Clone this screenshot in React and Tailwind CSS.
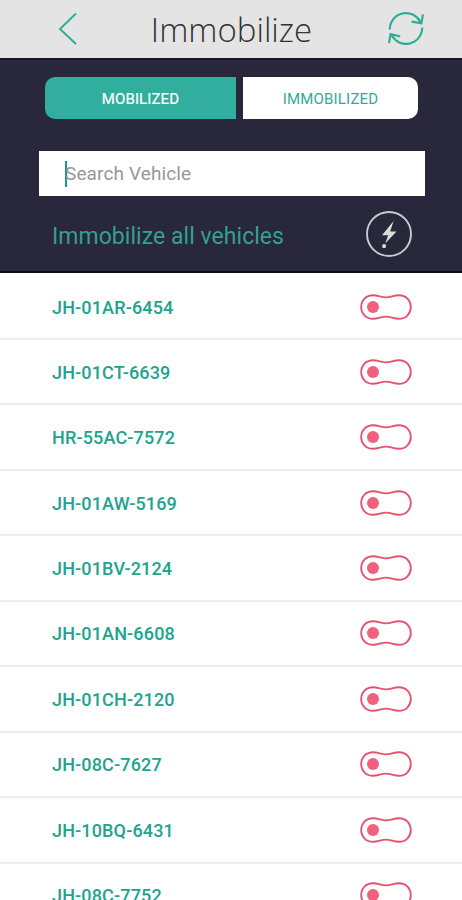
import { useState } from "react"

const vehicles = [
  "JH-01AR-6454",
  "JH-01CT-6639",
  "HR-55AC-7572",
  "JH-01AW-5169",
  "JH-01BV-2124",
  "JH-01AN-6608",
  "JH-01CH-2120",
  "JH-08C-7627",
  "JH-10BQ-6431",
  "JH-08C-7752",
]

function BackIcon() {
  return (
    <svg width="20" height="34" viewBox="0 0 20 34" fill="none" stroke="#2fae95" strokeWidth="2">
      <path d="M18 1.5 2 17l16 15" />
    </svg>
  )
}

function RefreshIcon() {
  return (
    <svg width="38" height="38" viewBox="0 0 38 38" fill="none" stroke="#2aad95" strokeWidth="2.1">
      <path d="M2.8 19.5a16.2 16.2 0 0 1 30.6-7.6" />
      <path d="M36 4.5 34.4 13.2 24.6 11.6" />
      <path d="M35.2 17.5a16.2 16.2 0 0 1-30.6 7.6" />
      <path d="M2 33 3.6 24 13.2 26.4" />
    </svg>
  )
}

function BoltIcon() {
  return (
    <svg width="48" height="48" viewBox="0 0 48 48" fill="none">
      <circle cx="24" cy="24" r="22" stroke="#cccbcc" strokeWidth="1.9" />
      <path d="M28.6 11 17 25.2h6.2L20.2 33.5 31.5 21.6h-6.3z" fill="#dddcdc" />
      <rect x="17.3" y="34.3" width="3.6" height="3.6" rx="0.8" fill="#dddcdc" />
    </svg>
  )
}

function ToggleIcon() {
  return (
    <svg width="52" height="26" viewBox="0 0 52 26" fill="none">
      <path
        d="M13 1.2C18.5 1.2 21 3.4 26 3.4S33.5 1.2 39 1.2C46 1.2 50.8 6.5 50.8 13S46 24.8 39 24.8C33.5 24.8 31 22.6 26 22.6S18.5 24.8 13 24.8C6 24.8 1.2 19.5 1.2 13S6 1.2 13 1.2Z"
        stroke="#e5546f"
        strokeWidth="1.9"
      />
      <circle cx="13" cy="13" r="6" fill="#f1607d" />
    </svg>
  )
}

export default function App() {
  const [search, setSearch] = useState("")

  return (
    <div className="h-[900px] w-[462px] overflow-hidden bg-white font-['Roboto',sans-serif]">
      <header className="flex h-[58px] items-center justify-between bg-[#e4e4e4] pl-[58px] pr-[37px]">
        <button>
          <BackIcon />
        </button>
        <h1 className="mr-[2px] pt-[2px] font-['Open_Sans',sans-serif] text-[33px] font-light leading-[40px] text-[#333]">
          Immobilize
        </h1>
        <button>
          <RefreshIcon />
        </button>
      </header>

      <section className="h-[215px] border-y-2 border-t-[#18152c] border-b-[#0c0a18] bg-[#29273c] pt-[17px]">
        <div className="ml-[45px] flex h-[42px] gap-[7px] text-[15px]">
          <button className="w-[191px] rounded-l-[10px] bg-[#31ae9e] pt-[2px] tracking-[0.1px] text-white [-webkit-text-stroke:0.2px_white]">
            MOBILIZED
          </button>
          <button className="w-[175px] rounded-r-[10px] bg-white pt-[2px] tracking-[0.2px] text-[#2fab9a]">
            IMMOBILIZED
          </button>
        </div>

        <div className="ml-[39px] mt-[32px] flex h-[45px] w-[386px] items-center bg-white pl-[26px]">
          <span className="-mr-[2px] h-[26px] w-[2px] bg-[#159b87]" />
          <input
            value={search}
            placeholder="Search Vehicle"
            className="w-[300px] pt-[2px] text-[19px] tracking-[0.12px] text-[#333] outline-none placeholder:text-[#979797]"
            onChange={(e) => setSearch(e.target.value)}
          />
        </div>

        <div className="mt-[14px] flex h-[48px] items-center justify-between pl-[52px] pr-[49px]">
          <p className="pt-[6px] text-[23px] tracking-[0.04px] text-[#359f91]">Immobilize all vehicles</p>
          <button>
            <BoltIcon />
          </button>
        </div>
      </section>

      <ul>
        {vehicles.map((plate) => (
          <li
            key={plate}
            className="flex h-[65.45px] items-center justify-between border-b-2 border-[#ededed] pl-[52px] pr-[50px] first:h-[67px] first:pt-[2px]"
          >
            <span className="pt-px text-[18px] font-medium tracking-[0.15px] text-[#20a48e]">{plate}</span>
            <ToggleIcon />
          </li>
        ))}
      </ul>
    </div>
  )
}
